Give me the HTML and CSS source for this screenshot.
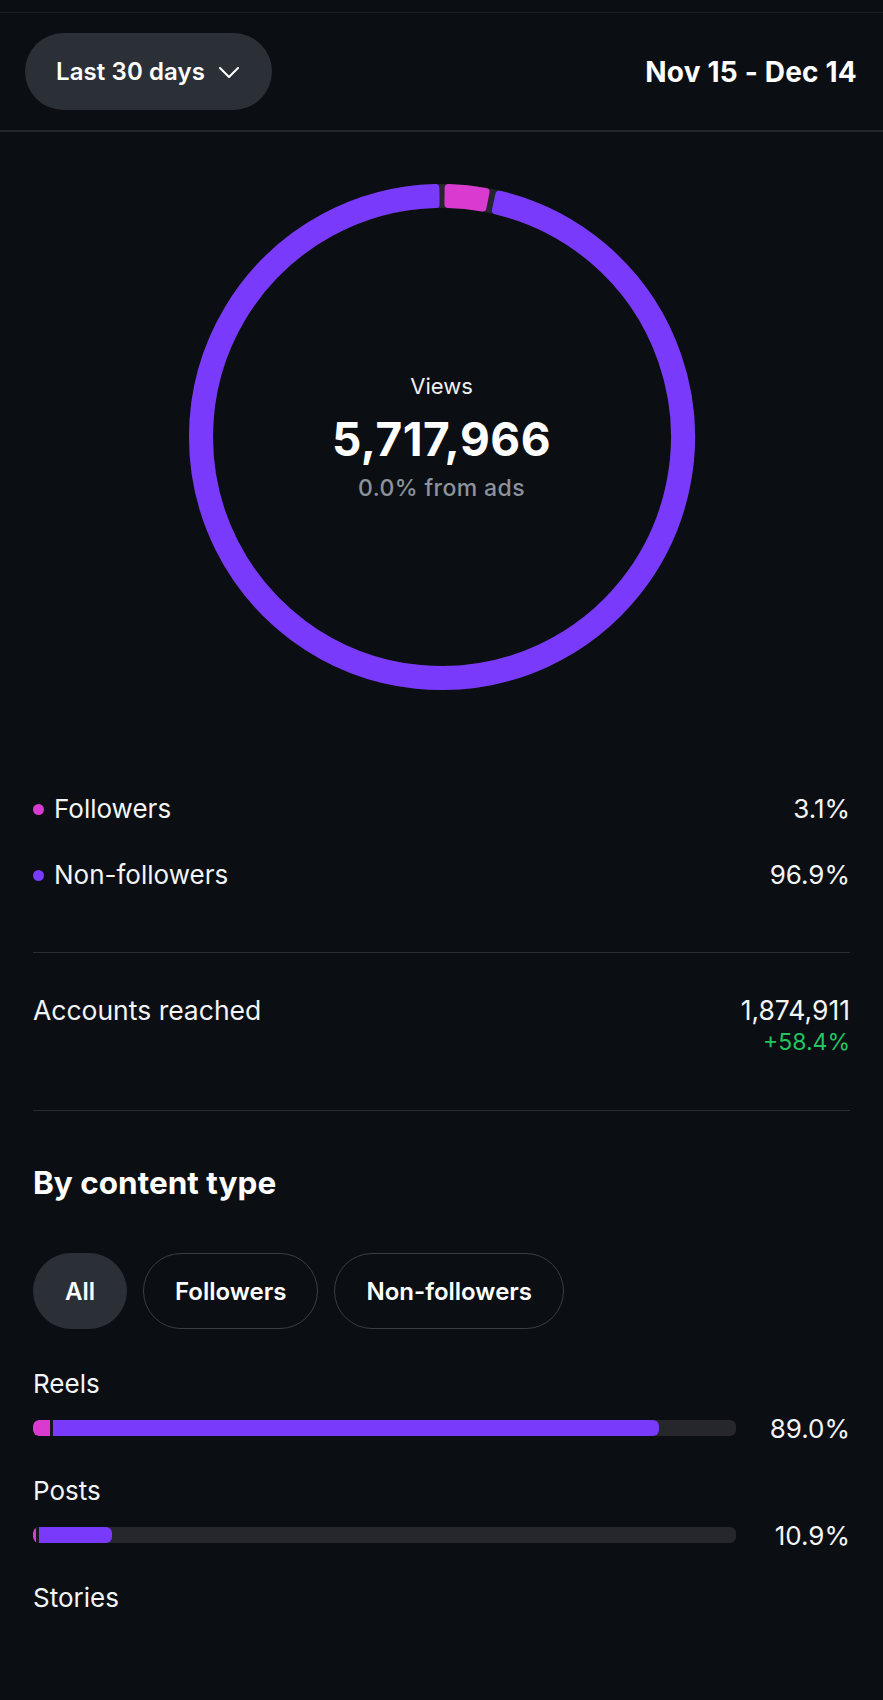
FILE: index.html
```html
<!DOCTYPE html>
<html lang="en">
<head>
    <meta charset="UTF-8">
    <title>Insights - Views</title>
    <link rel="stylesheet" href="styles.css">
</head>
<body>
    <header class="topbar">
        <button class="range-btn">Last 30 days
            <svg class="chev" width="20" height="11" viewBox="0 0 20 11"><path d="M1 1 L10 10 L19 1" fill="none" stroke="#fff" stroke-width="2" stroke-linecap="round" stroke-linejoin="round"/></svg>
        </button>
        <div class="range-dates">Nov 15 - Dec 14</div>
    </header>

    <section class="donut">
        <svg class="ring" width="520" height="520" viewBox="0 0 520 520">
            <circle cx="260" cy="260" r="241" fill="none" stroke="#24262c" stroke-width="24"/>
            <!-- followers 3.1% -->
            <path d="M266.61 11.09 A249 249 0 0 1 303.58 14.84 L300.53 30.55 A233 233 0 0 0 266.44 27.09 Z" fill="#d93bd1" stroke="#d93bd1" stroke-width="8" stroke-linejoin="round"/>
            <!-- non-followers 96.9% -->
            <path d="M317.37 17.70 A249 249 0 1 1 253.39 11.09 L253.56 27.09 A233 233 0 1 0 313.94 33.33 Z" fill="#7a3afc" stroke="#7a3afc" stroke-width="8" stroke-linejoin="round"/>
        </svg>
        <div class="donut-center">
            <div class="donut-label">Views</div>
            <div class="donut-value">5,717,966</div>
            <div class="donut-sub">0.0% from ads</div>
        </div>
    </section>

    <main class="content">
        <div class="legend">
            <div class="row">
                <span class="row-name"><i class="dot pink"></i>Followers</span>
                <span>3.1%</span>
            </div>
            <div class="row">
                <span class="row-name"><i class="dot purple"></i>Non-followers</span>
                <span>96.9%</span>
            </div>
        </div>

        <hr class="divider">

        <div class="row reach">
            <span>Accounts reached</span>
            <div class="reach-nums">
                <div>1,874,911</div>
                <div class="delta">+58.4%</div>
            </div>
        </div>

        <hr class="divider">

        <h3 class="section-title">By content type</h3>

        <div class="pills">
            <button class="pill active">All</button>
            <button class="pill">Followers</button>
            <button class="pill">Non-followers</button>
        </div>

        <div class="types">
            <div class="type">
                <div class="type-name">Reels</div>
                <div class="bar-row">
                    <div class="track">
                        <div class="seg pink" style="width: 2.9%"></div>
                        <div class="seg purple" style="width: 86.2%"></div>
                    </div>
                    <span class="pct">89.0%</span>
                </div>
            </div>
            <div class="type">
                <div class="type-name">Posts</div>
                <div class="bar-row">
                    <div class="track">
                        <div class="seg pink" style="width: 0.9%"></div>
                        <div class="seg purple" style="width: 10.3%"></div>
                    </div>
                    <span class="pct">10.9%</span>
                </div>
            </div>
            <div class="type">
                <div class="type-name">Stories</div>
            </div>
        </div>
    </main>
</body>
</html>
```

FILE: styles.css
```css
body { margin: 0; padding-top: 12px; background: #0b0f13; color: #f3f4f6; font-family: Inter, "Noto Sans", sans-serif; min-height: 1688px; }

.topbar { display: flex; justify-content: space-between; align-items: center; padding: 20px 26px 20px 25px; border-top: 1px solid #1b1e23; border-bottom: 2px solid #23262b; }
.range-btn { display: flex; align-items: center; gap: 14px; height: 77px; padding: 0 33px 0 31px; border: none; border-radius: 39px; background: #2b2f36; color: #fff; font-family: inherit; font-size: 24px; font-weight: 600; letter-spacing: 0.1px; }
.chev { margin-top: 2px; }
.range-dates { font-size: 28px; font-weight: 700; color: #fff; letter-spacing: 0.2px; }

.donut { display: grid; justify-items: center; align-items: center; margin-top: 45px; }
.donut > * { grid-area: 1 / 1; }
.donut-center { text-align: center; }
.donut-label { font-size: 22px; line-height: 28px; color: #f0f0f2; }
.donut-value { font-size: 46px; line-height: 52px; font-weight: 700; margin-top: 13px; color: #fff; letter-spacing: 0.5px; }
.donut-sub { font-size: 23px; line-height: 28px; font-weight: 500; margin-top: 9px; color: #8d929b; letter-spacing: 0.4px; }

.content { padding: 0 33px; }
.legend { display: flex; flex-direction: column; gap: 30px; margin-top: 94px; }
.row { display: flex; justify-content: space-between; font-size: 26px; line-height: 36px; }
.row-name { display: flex; align-items: center; }
.dot { width: 11px; height: 11px; border-radius: 50%; margin-right: 10px; }
.pink { background: #d93bd1; }
.purple { background: #7a3afc; }

.divider { border: none; height: 1px; background: #2a2d33; margin: 59px 0 0; }
.reach { margin-top: 39px; font-size: 26.5px; }
.reach-nums { text-align: right; }
.delta { font-size: 23px; line-height: 28px; color: #22c55e; }
.reach + .divider { margin-top: 54px; }

.section-title { font-size: 31.5px; line-height: 40px; font-weight: 700; margin: 52px 0 0; color: #fff; }

.pills { display: flex; gap: 16px; margin-top: 50px; }
.pill { height: 76px; padding: 0 31px; border-radius: 38px; border: 1.5px solid #3a3d44; background: transparent; color: #fff; font-family: inherit; font-size: 24px; font-weight: 600; }
.pill.active { background: #2b2f36; border-color: #2b2f36; }

.types { margin-top: 37px; display: flex; flex-direction: column; gap: 27px; }
.type-name { font-size: 26px; line-height: 36px; }
.bar-row { display: grid; grid-template-columns: 1fr 114px; align-items: center; height: 36px; margin-top: 8px; }
.track { display: flex; height: 16px; border-radius: 6px; background: #25272d; overflow: hidden; }
.seg { height: 100%; }
.seg.pink { border-radius: 6px 0 0 6px; border-right: 3px solid #15171b; box-sizing: border-box; }
.seg.purple { border-radius: 0 6px 6px 0; }
.pct { text-align: right; font-size: 26px; }
```
